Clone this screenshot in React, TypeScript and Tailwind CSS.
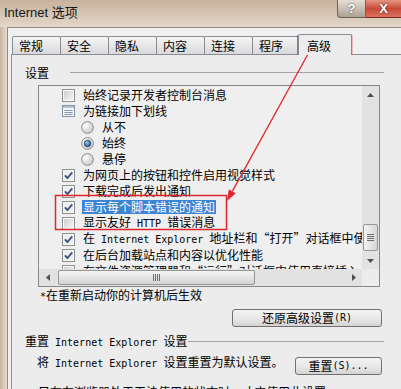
import React from "react";

// latin text inside the dialog uses the narrow mono face (6px per char)
const M = ({ t }: { t: string }) => (
  <span className="font-['DejaVu_Sans_Mono',monospace] text-[10px]">{t}</span>
);

function Check({ on }: { on?: boolean }) {
  return (
    <svg width="13" height="13" viewBox="0 0 13 13" className="shrink-0">
      <defs>
        <linearGradient id="cbg" x1="0" y1="0" x2="1" y2="1">
          <stop offset="0" stopColor="#cfcfcf" />
          <stop offset="1" stopColor="#f4f4f4" />
        </linearGradient>
      </defs>
      <rect x="0.5" y="0.5" width="12" height="12" fill="#fafafa" stroke="#8e8f8f" />
      <rect x="2" y="2" width="9" height="9" fill={on ? "#eeeeee" : "url(#cbg)"} />
      {on && <path d="M3 6.3 L5.4 9 L10.2 3.3" fill="none" stroke="#3d4d85" strokeWidth="1.8" />}
    </svg>
  );
}

function Radio({ on }: { on?: boolean }) {
  return (
    <svg width="13" height="13" viewBox="0 0 13 13" className="shrink-0">
      <defs>
        <radialGradient id="rbg" cx="0.35" cy="0.35" r="0.75">
          <stop offset="0" stopColor="#fdfdfd" />
          <stop offset="1" stopColor="#c4c4c4" />
        </radialGradient>
        <radialGradient id="rdot" cx="0.4" cy="0.35" r="0.7">
          <stop offset="0" stopColor="#9ccbf2" />
          <stop offset="1" stopColor="#154c84" />
        </radialGradient>
      </defs>
      <circle cx="6.5" cy="6.5" r="5.9" fill="url(#rbg)" stroke="#8e8f8f" />
      {on && <circle cx="6.5" cy="6.5" r="3.2" fill="url(#rdot)" stroke="#1b3b63" strokeWidth="0.8" />}
    </svg>
  );
}

function GroupIcon() {
  return (
    <svg width="13" height="12" viewBox="0 0 13 12" className="shrink-0">
      <rect x="0.5" y="0.5" width="12" height="11" fill="#f3f5f8" stroke="#8593a7" />
      <rect x="1" y="1" width="11" height="2" fill="#b3c1d2" />
      <path d="M2.5 5.5h8M2.5 7.5h8M2.5 9.5h8" stroke="#8796ab" />
    </svg>
  );
}

type Row = { k: "c" | "r" | "g"; on?: boolean; sel?: boolean; t: React.ReactNode };

const rows: Row[] = [
  { k: "c", t: "始终记录开发者控制台消息" },
  { k: "g", t: "为链接加下划线" },
  { k: "r", t: "从不" },
  { k: "r", on: true, t: "始终" },
  { k: "r", t: "悬停" },
  { k: "c", on: true, t: "为网页上的按钮和控件启用视觉样式" },
  { k: "c", on: true, t: "下载完成后发出通知" },
  { k: "c", on: true, sel: true, t: "显示每个脚本错误的通知" },
  { k: "c", t: <>显示友好<M t=" HTTP " />错误消息</> },
  { k: "c", on: true, t: <>在<M t=" Internet Explorer " />地址栏和“打开”对话框中使用直接插入</> },
  { k: "c", on: true, t: "在后台加载站点和内容以优化性能" },
  { k: "c", t: "在文件资源管理器和“运行”对话框中使用直接插入" },
];

const tabs = ["常规", "安全", "隐私", "内容", "连接", "程序"];

function Arrow({ dir }: { dir: "up" | "down" | "left" | "right" }) {
  const pts = {
    up: "0,4 3.5,0 7,4",
    down: "0,0 3.5,4 7,0",
    left: "4,0 0,3.5 4,7",
    right: "0,0 4,3.5 0,7",
  }[dir];
  const v = dir === "up" || dir === "down";
  return (
    <svg width={v ? 7 : 4} height={v ? 4 : 7} viewBox={v ? "0 0 7 4" : "0 0 4 7"}>
      <polygon points={pts} fill="#505050" />
    </svg>
  );
}

export default function App() {
  return (
    <div className="relative w-[401px] h-[389px] overflow-hidden bg-[#e3d8cb] font-['Noto_Sans_CJK_SC',sans-serif] text-[12px] leading-[16px] text-black">
      {/* Title bar */}
      <div className="flex h-[27px] bg-linear-to-b from-[#c7b29c] to-[#e2d7c9]">
        <div className="pl-[4px] pt-[4px] text-[13px] leading-[18px] font-['Liberation_Sans','Noto_Sans_CJK_SC',sans-serif] text-[#151515]">
          Internet 选项
        </div>
        <div className="ml-auto flex h-[18px]">
          <div className="w-[29px] flex items-center justify-center rounded-bl-[4px] border border-t-0 border-[#6b625a] bg-linear-to-b from-[#e6ded6] to-[#ada195] text-white font-bold text-[13px] font-['Liberation_Sans',sans-serif] [text-shadow:0_0_2px_#333]">
            ?
          </div>
          <div className="w-[35px] flex items-center justify-center border-b border-[#7a2b22] bg-linear-to-b from-[#e49584] via-[#c94a3a] to-[#d9725d] text-white font-bold text-[13px] font-['Liberation_Sans',sans-serif] [text-shadow:0_0_2px_#411]">
            X
          </div>
        </div>
      </div>

      <div className="flex">
        <div className="w-[7px] h-[362px] shrink-0 bg-linear-to-r from-[#c8b2a1] to-[#e6ddd1]" />
        <div className="w-[420px] h-[362px] shrink-0 border-l border-t border-[#8e8883] bg-[#f0f0f0] pl-[3px] pt-[6px]">
          {/* Tabs */}
          <div className="flex items-end h-[20px] pl-[1px]">
            {tabs.map((t, i) => (
              <div
                key={t}
                className={`${i === 0 ? "" : "-ml-px"} w-[49px] h-[18px] border border-b-0 border-[#898c95] rounded-t-[2px] bg-linear-to-b from-[#f5f5f5] to-[#d9d9d9] pl-[6px] leading-[17px]`}
              >
                {t}
              </div>
            ))}
            <div className="relative z-10 -ml-[3px] -mb-px w-[54px] h-[21px] border border-b-0 border-[#898c95] rounded-t-[2px] bg-[#ececec] pl-[8px] pt-[2px] leading-[17px]">
              高级
            </div>
          </div>

          {/* Tab page */}
          <div className="h-[345px] border border-[#898c95] bg-[#ececec]">
            <div className="w-[372px]">
              <div className="flex items-center mt-[10px] pl-[13px]">
                <span>设置</span>
                <div className="flex-1 ml-[21px] h-px bg-[#a3a3a3] mb-[2px]" />
              </div>

              {/* Settings list */}
              <div className="ml-[26px] mt-[4px] w-[342px] h-[202px] border border-[#828790] bg-[#efefef] flex flex-col">
                <div className="flex h-[183px]">
                  <div className="flex-1 overflow-hidden pt-[1px]">
                    {rows.map((r, i) => (
                      <div
                        key={i}
                        className={`h-[16px] flex items-center whitespace-nowrap ${r.k === "r" ? "pl-[42px]" : "pl-[23px]"}`}
                      >
                        {r.k === "c" && <Check on={r.on} />}
                        {r.k === "r" && <Radio on={r.on} />}
                        {r.k === "g" && <GroupIcon />}
                        {r.sel ? (
                          <span className="ml-[7px] px-[1px] leading-[14px] bg-[#3b84d6] text-white">{r.t}</span>
                        ) : (
                          <span className="ml-[8px]">{r.t}</span>
                        )}
                      </div>
                    ))}
                  </div>
                  <div className="w-[17px] flex flex-col bg-[#e2e2e2]">
                    <div className="h-[17px] flex items-center justify-center">
                      <Arrow dir="up" />
                    </div>
                    <div className="flex-1" />
                    <div className="h-[27px] mx-[1px] mb-[1px] rounded-[2px] border border-[#959595] bg-linear-to-r from-[#f4f4f4] to-[#d6d6d6] flex flex-col items-center justify-center gap-[1px]">
                      <div className="w-[7px] h-px bg-[#6e6e6e]" />
                      <div className="w-[7px] h-px bg-[#6e6e6e]" />
                      <div className="w-[7px] h-px bg-[#6e6e6e]" />
                      <div className="w-[7px] h-px bg-[#6e6e6e]" />
                    </div>
                    <div className="h-[17px] flex items-center justify-center">
                      <Arrow dir="down" />
                    </div>
                  </div>
                </div>
                <div className="flex h-[17px]">
                  <div className="flex-1 flex bg-[#e2e2e2]">
                    <div className="w-[17px] flex items-center justify-center">
                      <Arrow dir="left" />
                    </div>
                    <div className="ml-[2px] my-[1px] w-[197px] rounded-[2px] border border-[#959595] bg-linear-to-b from-[#f4f4f4] to-[#d4d4d4] flex items-center justify-center gap-[1px]">
                      <div className="w-px h-[7px] bg-[#6e6e6e]" />
                      <div className="w-px h-[7px] bg-[#6e6e6e]" />
                      <div className="w-px h-[7px] bg-[#6e6e6e]" />
                      <div className="w-px h-[7px] bg-[#6e6e6e]" />
                    </div>
                    <div className="flex-1" />
                    <div className="w-[17px] flex items-center justify-center">
                      <Arrow dir="right" />
                    </div>
                  </div>
                  <div className="w-[17px] bg-[#ececec]" />
                </div>
              </div>

              <div className="ml-[28px]">
                <M t="*" />在重新启动你的计算机后生效
              </div>

              <div className="mt-[4px] ml-[220px] w-[150px] h-[18px] rounded-[3px] border border-[#707070] bg-linear-to-b from-[#f3f3f3] via-[#e9e9e9] to-[#d4d4d4] flex items-center justify-center">
                还原高级设置<M t="(R)" />
              </div>

              <div className="flex items-center mt-[6px] pl-[13px] whitespace-nowrap">
                <span>
                  重置<M t=" Internet Explorer " />设置
                </span>
                <div className="flex-1 ml-[1px] h-px bg-[#a3a3a3] mb-[2px]" />
              </div>

              <div className="flex items-start mt-[3px] pl-[25px] whitespace-nowrap">
                <span>
                  将<M t=" Internet Explorer " />设置重置为默认设置。
                </span>
                <div className="ml-auto mr-[2px] mt-[3px] w-[87px] h-[18px] rounded-[3px] border border-[#707070] bg-linear-to-b from-[#f3f3f3] via-[#e9e9e9] to-[#d4d4d4] flex items-center justify-center">
                  重置<M t="(S)..." />
                </div>
              </div>

              <div className="mt-[9px] pl-[26px] whitespace-nowrap">
                只有在浏览器处于无法使用的状态时，才应使用此设置。
              </div>
            </div>
          </div>
        </div>
      </div>

      {/* Red annotation overlay */}
      <svg className="absolute left-0 top-0 pointer-events-none" width="401" height="389" viewBox="0 0 401 389">
        <rect x="298" y="36" width="53.5" height="18" fill="none" stroke="#e0262c" strokeWidth="1.5" />
        <rect x="55.5" y="195.5" width="171" height="34" fill="none" stroke="#e0262c" strokeWidth="1.5" />
        <line x1="308" y1="54" x2="232.3" y2="191.4" stroke="#e0262c" strokeWidth="1.3" />
        <polygon points="227,201 235.8,193.3 228.8,189.5" fill="#e0262c" />
      </svg>
    </div>
  );
}
